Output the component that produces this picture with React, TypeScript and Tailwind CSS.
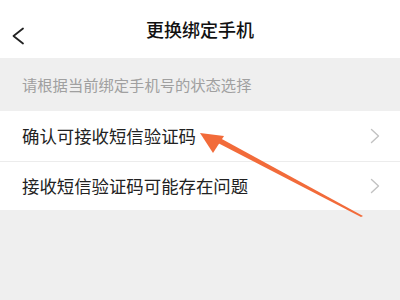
const font = { fontFamily: '"Noto Sans CJK SC", "Noto Sans", sans-serif' };

function Chevron() {
  return (
    <svg width="10" height="16" viewBox="0 0 10 16" className="shrink-0">
      <path d="M1.5 1.5 L8.5 8 L1.5 14.5" fill="none" stroke="#c2c2c2" strokeWidth="1.4" strokeLinecap="round" strokeLinejoin="round" />
    </svg>
  );
}

export default function App() {
  return (
    <div className="relative w-[400px] h-[300px] overflow-hidden bg-[#efefef]" style={font}>
      {/* 顶部导航 */}
      <div className="relative h-[58px] bg-white flex items-center justify-center">
        <svg className="absolute left-[11px] top-[27px]" width="14" height="18" viewBox="0 0 14 18">
          <path d="M12 1.5 L2.5 9 L12 16.5" fill="none" stroke="#222" strokeWidth="1.8" strokeLinecap="round" strokeLinejoin="round" />
        </svg>
        <span className="text-[18px] font-medium text-[#111] leading-none">更换绑定手机</span>
      </div>

      {/* 提示 */}
      <div className="h-[53px] flex items-center px-[22px]">
        <span className="text-[15.3px] text-[#a0a0a0] leading-none">请根据当前绑定手机号的状态选择</span>
      </div>

      {/* 选项 */}
      <div className="bg-white">
        <div className="h-[51px] flex items-center justify-between pl-[22px] pr-[20px] border-b border-[#ececec]">
          <span className="text-[17.4px] text-[#222] leading-none">确认可接收短信验证码</span>
          <Chevron />
        </div>
        <div className="h-[48px] flex items-center justify-between pl-[22px] pr-[20px]">
          <span className="text-[17.4px] text-[#222] leading-none">接收短信验证码可能存在问题</span>
          <Chevron />
        </div>
      </div>

      {/* 标注箭头 */}
      <svg className="absolute inset-0 pointer-events-none" width="400" height="300" viewBox="0 0 400 300">
        <polygon points="200,133 224,136 213,153" fill="#f26b3a" />
        <polygon points="216,142 220,138 363,216 361,217" fill="#f26b3a" />
      </svg>
    </div>
  );
}
